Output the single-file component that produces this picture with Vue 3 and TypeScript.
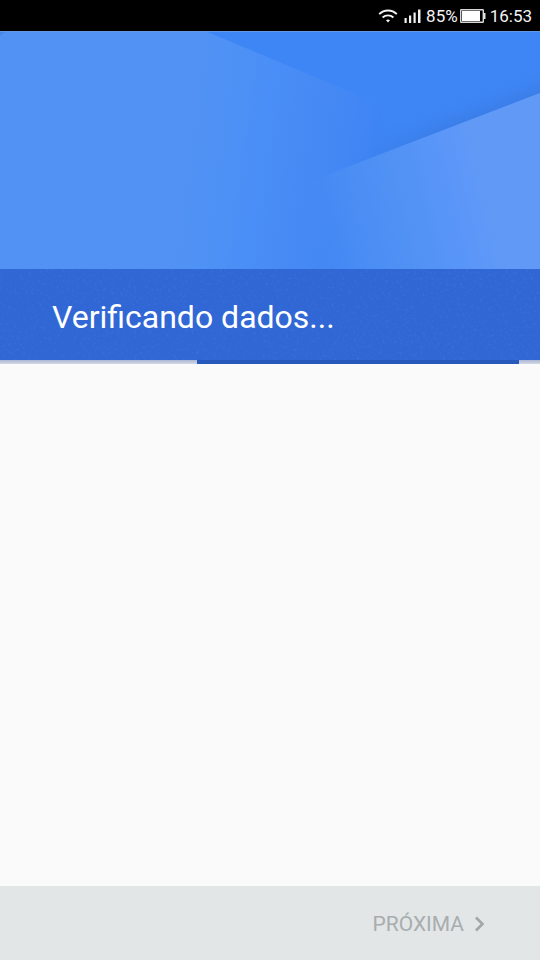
<script setup lang="ts">
import { ref } from 'vue'

interface Segment {
  start: number
  length: number
}

const time = ref('16:53')
const battery = ref(85)
const title = ref('Verificando dados...')
const segment = ref<Segment>({ start: 36.5, length: 59.6 })
</script>

<template>
  <div class="screen">
    <div class="status">
      <svg class="wifi" width="20" height="16" viewBox="0 0 20 16" aria-hidden="true">
        <g fill="none" stroke="#f4f4f4" stroke-width="1.9">
          <path d="M1.2 6.200C6 1.200 14 1.200 18.8 6.200" />
          <path d="M4.6 9.500c3-2.800 7.800-2.800 10.800 0" />
        </g>
        <path d="M8 12.300c1.200-1 2.800-1 4 0L10 14.500z" fill="#f4f4f4" />
      </svg>
      <svg class="signal" width="18" height="14" viewBox="0 0 18 14" aria-hidden="true">
        <g fill="#f0f0f0">
          <rect x="0.500" y="9" width="2.200" height="5" />
          <rect x="5" y="6.500" width="2.200" height="7.500" />
          <rect x="9.500" y="3.500" width="2.200" height="10.500" />
          <rect x="14" y="0.500" width="2.500" height="13.500" />
        </g>
      </svg>
      <span>{{ battery }}%</span>
      <svg class="battery" width="26" height="14" viewBox="0 0 26 14" aria-hidden="true">
        <rect x="0.700" y="0.700" width="22.600" height="12.600" rx="0.500" fill="none" stroke="#d8d8d8" stroke-width="1.400" />
        <rect x="2" y="2" width="18" height="10" fill="#fff" />
        <rect x="23.500" y="4" width="2" height="6" fill="#e4e4e4" />
      </svg>
      <time>{{ time }}</time>
    </div>

    <header>
      <svg class="art" viewBox="0 0 540 238" preserveAspectRatio="none" aria-hidden="true">
        <defs>
          <linearGradient id="left-sheet" gradientUnits="userSpaceOnUse" x1="190" y1="110" x2="375" y2="135">
            <stop offset="0" stop-color="#5192f4" />
            <stop offset="0.200" stop-color="#4e91f5" />
            <stop offset="0.380" stop-color="#4a8ef7" />
            <stop offset="0.600" stop-color="#488af4" />
            <stop offset="1" stop-color="#3e85f4" />
          </linearGradient>
          <linearGradient id="right-sheet" gradientUnits="userSpaceOnUse" x1="300" y1="190" x2="485" y2="145">
            <stop offset="0" stop-color="#4688f3" stop-opacity="0" />
            <stop offset="0.250" stop-color="#498cf4" />
            <stop offset="0.550" stop-color="#5192f4" />
            <stop offset="0.800" stop-color="#5a96f9" />
            <stop offset="1" stop-color="#6199f6" />
          </linearGradient>
          <linearGradient id="fold-shade" gradientUnits="userSpaceOnUse" x1="440" y1="101" x2="431" y2="77">
            <stop offset="0" stop-color="#3a7de6" />
            <stop offset="1" stop-color="#3e86f5" stop-opacity="0" />
          </linearGradient>
          <linearGradient id="shade-fade" gradientUnits="userSpaceOnUse" x1="350" y1="0" x2="440" y2="0">
            <stop offset="0" stop-color="#000" />
            <stop offset="1" stop-color="#fff" />
          </linearGradient>
          <mask id="shade-mask">
            <rect width="540" height="238" fill="url(#shade-fade)" />
          </mask>
        </defs>
        <rect width="540" height="238" fill="#3e86f5" />
        <path d="M0 0H205L380 73L405 238H0Z" fill="url(#left-sheet)" />
        <path d="M0 0H9Q3 1 0 5Z" fill="#4488ee" />
        <path d="M320 146L540 62V30L320 116Z" fill="url(#fold-shade)" mask="url(#shade-mask)" />
        <path d="M540 62L290 158L290 238H540Z" fill="url(#right-sheet)" />
        <path d="M0 0.500H540" stroke="#6497e6" />
      </svg>
      <div class="heading">
        <svg class="grain" width="100%" height="100%" aria-hidden="true">
          <filter id="specks" x="0" y="0" width="100%" height="100%" color-interpolation-filters="sRGB">
            <feTurbulence type="fractalNoise" baseFrequency="0.350" numOctaves="2" seed="7" />
            <feColorMatrix values="0 0 0 0 0.400  0 0 0 0 0.580  0 0 0 0 0.940  1.800 0 0 0 -1" />
          </filter>
          <rect width="100%" height="100%" filter="url(#specks)" opacity="0.350" />
        </svg>
        <h1>{{ title }}</h1>
      </div>
    </header>

    <div class="progress" role="progressbar" :aria-label="title">
      <div class="bar" :style="{ marginLeft: segment.start + '%', width: segment.length + '%' }"></div>
    </div>

    <main></main>

    <footer>
      <button type="button" disabled>
        <span>PRÓXIMA</span>
        <svg width="12" height="18" viewBox="0 0 12 18" aria-hidden="true">
          <path d="M2 2.500L8.500 9L2 15.500" fill="none" stroke="#a2a6a7" stroke-width="2.600" />
        </svg>
      </button>
    </footer>
  </div>
</template>

<style>
body {
  margin: 0;
}
</style>

<style scoped>
.screen {
  display: flex;
  flex-direction: column;
  min-height: 100vh;
  background: #fafafa;
  font-family: Roboto, "Liberation Sans", sans-serif;
}

.status {
  display: flex;
  align-items: center;
  justify-content: flex-end;
  height: 31px;
  padding-right: 8px;
  background: #000;
  color: #f4f4f4;
  font-size: 17px;
  line-height: 32px;
}

.wifi {
  margin-right: 6px;
}

.signal {
  margin-right: 4px;
}

.battery {
  margin: 0 4px 0 2px;
}

.art {
  display: block;
  width: 100%;
  height: 238px;
}

.heading {
  display: grid;
  align-items: center;
  background: #3067d5;
}

.grain,
h1 {
  grid-area: 1 / 1;
}

.grain {
  height: 91px;
}

h1 {
  margin: 0;
  padding: 4px 52px 0;
  color: #fff;
  font-size: 32px;
  font-weight: 400;
  line-height: 40px;
}

.progress {
  height: 4px;
  background: linear-gradient(#a9b6d4, #d3dae6);
}

.bar {
  height: 100%;
  background: #2759bd;
}

main {
  flex: 1;
}

footer {
  display: flex;
  align-items: center;
  justify-content: flex-end;
  box-sizing: border-box;
  height: 74px;
  padding: 2px 54px 0 0;
  background: #e2e6e7;
}

button {
  display: flex;
  align-items: center;
  gap: 10px;
  padding: 0;
  border: 0;
  background: none;
  color: #a8adae;
  font: inherit;
  font-size: 21px;
  line-height: 28px;
}
</style>
